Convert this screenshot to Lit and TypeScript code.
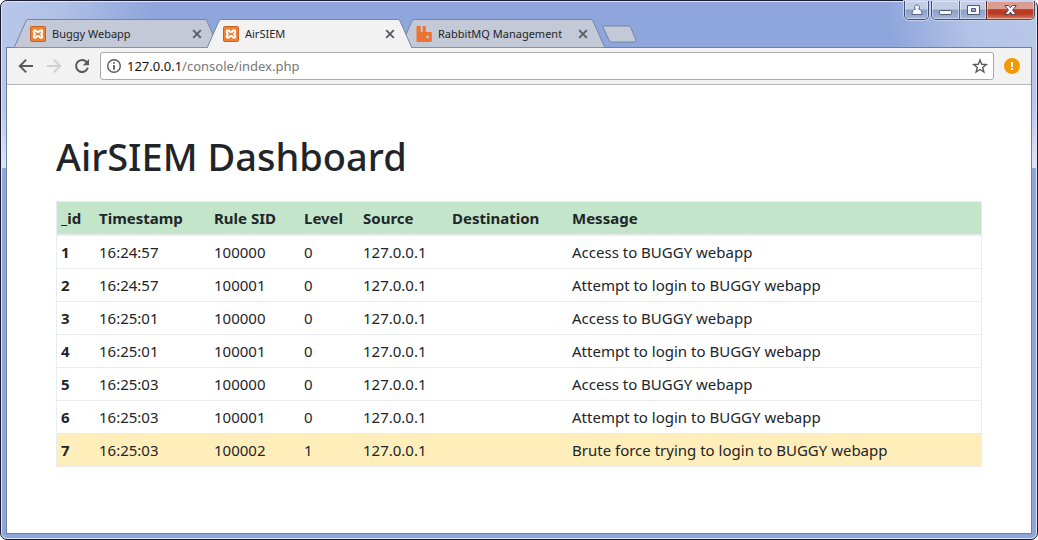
import { LitElement, html, css, svg, nothing } from 'lit';
import { customElement, property } from 'lit/decorators.js';
import { classMap } from 'lit/directives/class-map.js';

interface EventRow {
  id: number;
  time: string;
  sid: string;
  level: number;
  source: string;
  destination: string;
  message: string;
}

const ACCESS = 'Access to BUGGY webapp';
const ATTEMPT = 'Attempt to login to BUGGY webapp';
const EVENTS: EventRow[] = [
  ['16:24:57', '100000', 0, ACCESS],
  ['16:24:57', '100001', 0, ATTEMPT],
  ['16:25:01', '100000', 0, ACCESS],
  ['16:25:01', '100001', 0, ATTEMPT],
  ['16:25:03', '100000', 0, ACCESS],
  ['16:25:03', '100001', 0, ATTEMPT],
  ['16:25:03', '100002', 1, 'Brute force trying to login to BUGGY webapp'],
].map(([time, sid, level, message], i) => ({
  id: i + 1,
  time: time as string,
  sid: sid as string,
  level: level as number,
  source: '127.0.0.1',
  destination: '',
  message: message as string,
}));

const xamppIcon = html`<svg class="favicon" width="16" height="16" viewBox="0 0 16 16" aria-hidden="true">
  <rect x=".5" y=".5" width="15" height="15" rx="1" fill="#f0812f" stroke="#c0622a"></rect>
  <path d="M5 4.3C3.4 4.3 3.2 6.6 5 8C3.2 9.4 3.4 11.7 5 11.7C6.6 11.7 6.2 10 8 10C9.8 10 9.4 11.7 11 11.7C12.6 11.7 12.8 9.4 11 8C12.8 6.6 12.6 4.3 11 4.3C9.4 4.3 9.8 6 8 6C6.2 6 6.6 4.3 5 4.3Z" fill="none" stroke="#fff" stroke-width="2" stroke-linejoin="round"></path>
</svg>`;

const rabbitIcon = html`<svg class="favicon" width="16" height="16" viewBox="0 0 16 16" aria-hidden="true">
  <path fill-rule="evenodd" fill="#ed7430" d="M1.300 0H4Q4.800 0 4.800 .8V6H6.700V.8Q6.700 0 7.500 0H9Q9.800 0 9.800 .8V6H15Q15.800 6 15.800 6.800V15.200Q15.800 16 15 16H1.300Q.5 16 .5 15.200V.8Q.5 0 1.300 0ZM10.300 9.700V12.200H12.800V9.700Z"></path>
</svg>`;

/** One browser tab with slanted edges. */
@customElement('browser-tab')
export class BrowserTab extends LitElement {
  static styles = css`
    :host { display: block; position: relative; flex: 0 1 205px; height: 29px; min-width: 0; }
    :host([active]) { z-index: 1; }
    .shape { position: absolute; inset: 0; width: 100%; height: 100%; }
    .row { position: relative; display: flex; align-items: center; height: 100%; padding: 0 16px; box-sizing: border-box; }
    button { border: 0; padding: 0; background: none; font: inherit; color: inherit; }
    .select { display: flex; align-items: center; gap: 6px; flex: 1; min-width: 0; text-align: left; white-space: nowrap; }
    .label { overflow: hidden; }
    .close { display: grid; place-items: center; width: 12px; height: 12px; }
    .favicon { flex: none; }
  `;
  @property() label = '';
  @property() icon = 'xampp';
  @property({ type: Boolean, reflect: true }) active = false;

  render() {
    const fill = this.active ? '#f2f2f2' : '#c3c9d6';
    return html`
      <svg class="shape" viewBox="0 0 205 29" preserveAspectRatio="none" aria-hidden="true">
        <path d="M0 29L12 2Q12.700 .5 14 .5H191Q192.300 .5 193 2L205 29Z" fill=${fill}></path>
        <path d="M0 29L12 2Q12.700 .5 14 .5H191Q192.300 .5 193 2L205 29" fill="none" stroke="#7484ab"></path>
        ${this.active ? nothing : svg`<path d="M0 28.500H205" stroke="#8590ab"></path>`}
      </svg>
      <div class="row">
        <button class="select" type="button">
          ${this.icon === 'rabbit' ? rabbitIcon : xamppIcon}
          <span class="label">${this.label}</span>
        </button>
        <button class="close" type="button" aria-label="Close tab">
          <svg width="10" height="10" viewBox="0 0 10 10"><path d="M1.200 1.200L8.800 8.800M8.800 1.200L1.200 8.800" stroke="#5a5d63" stroke-width="1.900"></path></svg>
        </button>
      </div>`;
  }
}

/** Caption buttons at the top right of the window. */
@customElement('window-controls')
export class WindowControls extends LitElement {
  static styles = css`
    :host { display: flex; gap: 2px; align-items: flex-start; }
    .group { display: flex; border: 1px solid #3f4d70; border-top: 0; border-radius: 0 0 5px 5px; overflow: hidden; box-shadow: 0 0 0 1px #c6d2ee; }
    button { display: grid; place-items: center; border: 0; padding: 0; height: 18px; width: 27px; box-shadow: inset 0 0 0 1px #ffffff70; background: linear-gradient(#c3cde3 0 45%, #8c9dc6 50%, #a5b6dd); }
    .user { width: 23px; }
    .max { border-left: 1px solid #56658b; }
    .close { width: 48px; border-left: 1px solid #5c2a28; background: linear-gradient(#dc9d90 0 42%, #bb3d27 48%, #b83a22 70%, #dc7a5c); }
  `;
  render() {
    return html`
      <div class="group">
        <button class="user" type="button" aria-label="User">
          <svg width="12" height="12" viewBox="0 0 12 12"><path d="M6 1a2.300 2.300 0 0 1 1.600 4.100C10 5.700 11 7 11 10.500H1C1 7 2 5.700 4.400 5.100A2.300 2.300 0 0 1 6 1Z" fill="#f4f6fb" stroke="#58668a"></path></svg>
        </button>
      </div>
      <div class="group">
        <button type="button" aria-label="Minimize">
          <svg width="13" height="12" viewBox="0 0 13 12"><rect x=".5" y="6.500" width="12" height="4" rx="1" fill="#f7f8fc" stroke="#4e5975"></rect></svg>
        </button>
        <button class="max" type="button" aria-label="Maximize">
          <svg width="13" height="12" viewBox="0 0 13 12"><path fill-rule="evenodd" d="M.5 1.500h12v9H.5zM4.500 4.500v3h4v-3z" fill="#f7f8fc" stroke="#4e5975"></path></svg>
        </button>
        <button class="close" type="button" aria-label="Close">
          <svg width="13" height="12" viewBox="0 0 13 12"><path d="M.8 1.500H4.500L6.500 3.800L8.500 1.500H12.200L8.600 6L12.200 10.500H8.500L6.500 8.200L4.500 10.500H.8L4.400 6Z" fill="#f7f8fc" stroke="#5a4454"></path></svg>
        </button>
      </div>`;
  }
}

/** Navigation buttons and the address field. */
@customElement('address-bar')
export class AddressBar extends LitElement {
  static styles = css`
    :host { display: flex; align-items: center; height: 36px; padding: 0 11px; background: #f2f2f2; border-bottom: 1px solid #b6b4b6; }
    button { display: grid; place-items: center; flex: none; border: 0; padding: 0; background: none; width: 16px; height: 16px; }
    nav { display: flex; gap: 12px; margin-right: 10px; }
    .field { flex: 1; min-width: 0; display: flex; align-items: center; gap: 5px; height: 26px; padding: 0 5px; background: #fff; border: 1px solid #a9a9a9; border-radius: 3px; }
    .url { flex: 1; min-width: 0; font-size: 13px; line-height: 20px; color: #777; }
    .host { color: #111; }
    .alert { margin-left: 10px; }
    svg { display: block; }
  `;
  render() {
    return html`
      <nav aria-label="History">
        <button type="button" aria-label="Back"><svg width="16" height="16" viewBox="0 0 16 16"><path d="M15 8H2M8.200 1.600L1.800 8L8.200 14.400" fill="none" stroke="#5a5a5a" stroke-width="2"></path></svg></button>
        <button type="button" aria-label="Forward" disabled><svg width="16" height="16" viewBox="0 0 16 16"><path d="M1 8H14M7.800 1.600L14.200 8L7.800 14.400" fill="none" stroke="#d0d0d0" stroke-width="2"></path></svg></button>
        <button type="button" aria-label="Reload"><svg width="16" height="16" viewBox="0 0 16 16"><path d="M12.600 4A6 6 0 1 0 13.800 9.800" fill="none" stroke="#5a5a5a" stroke-width="2"></path><path d="M15 1V7.200H8.800Z" fill="#5a5a5a"></path></svg></button>
      </nav>
      <div class="field">
        <button type="button" aria-label="Site information"><svg width="16" height="16" viewBox="0 0 16 16"><circle cx="8" cy="8" r="6.300" fill="none" stroke="#5a5a5a" stroke-width="1.400"></circle><path d="M8 4.200V5.800M8 7V11.800" stroke="#5a5a5a" stroke-width="1.800"></path></svg></button>
        <div class="url" role="textbox" aria-label="Address" contenteditable="plaintext-only" spellcheck="false"><span class="host">127.0.0.1</span>/console/index.php</div>
        <button type="button" aria-label="Bookmark this page"><svg width="16" height="16" viewBox="0 0 16 16"><path d="M8 2L9.700 6.300L14.200 6.600L10.700 9.500L11.900 14L8 11.500L4.100 14L5.300 9.500L1.800 6.600L6.300 6.300Z" fill="none" stroke="#5a5a5a" stroke-width="1.400"></path></svg></button>
      </div>
      <button class="alert" type="button" aria-label="Update available"><svg width="16" height="16" viewBox="0 0 16 16"><circle cx="8" cy="8" r="8" fill="#f29900"></circle><path d="M8 4V9M8 10V12" stroke="#fff" stroke-width="2"></path></svg></button>`;
  }
}

/** Table of correlated security events. */
@customElement('event-table')
export class EventTable extends LitElement {
  static styles = css`
    :host { display: block; }
    table { width: 100%; table-layout: fixed; border-collapse: collapse; border: 1px solid #e9ecef; font-size: 15px; line-height: 24px; }
    th, td { padding: 4px; text-align: left; white-space: nowrap; border-top: 1px solid #e9ecef; }
    th { font-weight: 700; }
    thead th { background: #c3e6cb; border-bottom: 2px solid #e9ecef; }
    .warning { background: #ffeeba; }
    .id { width: 30px; }
    .time { width: 107px; }
    .sid { width: 82px; }
    .level { width: 51px; }
    .source { width: 81px; }
    .destination { width: 112px; }
  `;
  @property({ attribute: false }) rows: EventRow[] = [];

  render() {
    return html`<table>
      <thead><tr>
        <th class="id" scope="col">_id</th>
        <th class="time" scope="col">Timestamp</th>
        <th class="sid" scope="col">Rule SID</th>
        <th class="level" scope="col">Level</th>
        <th class="source" scope="col">Source</th>
        <th class="destination" scope="col">Destination</th>
        <th scope="col">Message</th>
      </tr></thead>
      <tbody>${this.rows.map((r) => html`<tr class=${classMap({ warning: r.level > 0 })}>
        <th scope="row">${r.id}</th><td>${r.time}</td><td>${r.sid}</td><td>${r.level}</td>
        <td>${r.source}</td><td>${r.destination}</td><td>${r.message}</td>
      </tr>`)}</tbody>
    </table>`;
  }
}

@customElement('app-root')
export class AppRoot extends LitElement {
  static styles = css`
    :host { display: block; font-family: "Noto Sans", "Open Sans", sans-serif; color: #212529; background: #fff; }
    .window {
      box-sizing: border-box; min-height: 100vh; display: flex; flex-direction: column;
      padding: 0 5px 5px; border: 1px solid #1b1c30; border-radius: 7px;
      box-shadow: inset 0 0 0 1px #dfe6f6;
      background:
        linear-gradient(100deg, #b9c8e9 0, #b0c0e6 60px, #8ea6db00 150px) 0 0 / 100% 48px no-repeat,
        linear-gradient(260deg, #b9c8e9 0, #b3c3e7 70px, #8ea6db00 150px) 0 0 / 100% 48px no-repeat,
        linear-gradient(#b9c8e9 50%, #dde4f4) 0 48px / 100% 119px no-repeat,
        #8ea6db;
    }
    .titlebar { display: flex; justify-content: space-between; align-items: flex-end; height: 46px; padding-left: 8px; font-size: 11px; }
    .tabs { display: flex; min-width: 0; flex: 1; margin-bottom: -1px; z-index: 1; }
    browser-tab + browser-tab { margin-left: -12px; }
    .new-tab { border: 0; padding: 0; background: none; align-self: center; margin-left: -3px; }
    .new-tab svg { display: block; }
    window-controls { align-self: flex-start; margin-right: -3px; }
    .frame { flex: 1; border: 1px solid #7080a5; background: #fff; display: flex; flex-direction: column; }
    main { padding: 48px 49px; }
    h1 { margin: 0 0 22px; font-size: 38px; line-height: 46px; font-weight: 500; }
  `;
  render() {
    return html`<div class="window">
      <header class="titlebar">
        <div class="tabs">
          <browser-tab label="Buggy Webapp"></browser-tab>
          <browser-tab label="AirSIEM" active></browser-tab>
          <browser-tab label="RabbitMQ Management" icon="rabbit"></browser-tab>
          <button class="new-tab" type="button" aria-label="New tab">
            <svg width="36" height="18" viewBox="0 0 36 18"><path d="M2.500 1H26Q28 1 29 3L34 15Q34.500 17 32.500 17H10Q8 17 7 15L1.500 3Q1 1 2.500 1Z" fill="#c3c9d6" stroke="#7484ab"></path></svg>
          </button>
        </div>
        <window-controls></window-controls>
      </header>
      <div class="frame">
        <address-bar></address-bar>
        <main>
          <h1>AirSIEM Dashboard</h1>
          <event-table .rows=${EVENTS}></event-table>
        </main>
      </div>
    </div>`;
  }
}
